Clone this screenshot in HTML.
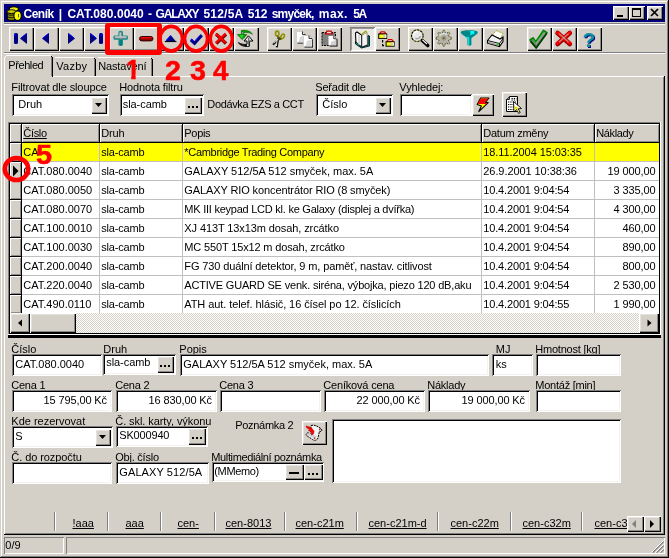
<!DOCTYPE html>
<html><head><meta charset="utf-8"><title>Ceník</title>
<style>
html,body{margin:0;padding:0;background:#D4D0C8;}
body{width:669px;height:558px;position:relative;overflow:hidden;font-family:"Liberation Sans",sans-serif;font-size:11px;color:#000;}
div,svg{position:absolute;box-sizing:border-box;}
svg{overflow:visible}
.t{white-space:nowrap;}
#w{left:0;top:0;width:669px;height:558px;will-change:transform;}
</style></head><body><div id="w">
<div style="left:0px;top:0px;width:669px;height:558px;background:#D4D0C8"></div>
<div style="left:1px;top:1px;width:667px;height:1px;background:#FFFFFF"></div>
<div style="left:1px;top:1px;width:1px;height:556px;background:#FFFFFF"></div>
<div style="left:0px;top:557px;width:669px;height:1px;background:#000000"></div>
<div style="left:668px;top:0px;width:1px;height:558px;background:#000000"></div>
<div style="left:1px;top:556px;width:667px;height:1px;background:#808080"></div>
<div style="left:667px;top:1px;width:1px;height:556px;background:#808080"></div>
<div style="left:4px;top:4px;width:661px;height:18px;background:#000080"></div>
<svg style="left:6px;top:6px" width="16" height="15" viewBox="0 0 16 15"><ellipse cx="7.8" cy="3" rx="4.6" ry="2.3" fill="#F0F000" stroke="#000" stroke-width="1.1"/>
<path d="M1.2 5.5 v6.5 c0 3.2 8.6 3.2 8.6 0 v-6.5z" fill="#909000" stroke="#000" stroke-width="1.1"/>
<path d="M1.2 7.6 c1 2.2 7 2.2 8.6 0 M1.2 10 c1 2.2 7 2.2 8.6 0" fill="none" stroke="#000" stroke-width=".9"/>
<ellipse cx="5.5" cy="5.6" rx="4.3" ry="2" fill="#C8C800" stroke="#000" stroke-width="1"/>
<ellipse cx="11.6" cy="9.7" rx="3.7" ry="4.7" fill="#FFFF00" stroke="#000" stroke-width="1.1"/>
<path d="M12.5 8 v3.5" stroke="#606000" stroke-width="1"/>
<rect x="4.4" y="2.4" width="1.1" height="1.1" fill="#C0C0C0"/><rect x="6.6" y="2.4" width="1.1" height="1.1" fill="#C0C0C0"/></svg>
<div class="t" style="left:23.5px;top:6.73px;font-size:12px;line-height:14px;letter-spacing:-0.498px;color:#fff;font-weight:bold">Ceník</div>
<div class="t" style="left:58.8px;top:6.73px;font-size:12px;line-height:14px;color:#fff;font-weight:bold">|</div>
<div class="t" style="left:67.4px;top:6.73px;font-size:12px;line-height:14px;letter-spacing:0.048px;color:#fff;font-weight:bold">CAT.080.0040</div>
<div class="t" style="left:147.9px;top:6.73px;font-size:12px;line-height:14px;color:#fff;font-weight:bold">-</div>
<div class="t" style="left:155.6px;top:6.73px;font-size:12px;line-height:14px;letter-spacing:-1.203px;color:#fff;font-weight:bold">GALAXY</div>
<div class="t" style="left:203.4px;top:6.73px;font-size:12px;line-height:14px;letter-spacing:0.233px;color:#fff;font-weight:bold">512/5A</div>
<div class="t" style="left:247.8px;top:6.73px;font-size:12px;line-height:14px;letter-spacing:-0.244px;color:#fff;font-weight:bold">512</div>
<div class="t" style="left:271.7px;top:6.73px;font-size:12px;line-height:14px;letter-spacing:-0.768px;color:#fff;font-weight:bold">smyček,</div>
<div class="t" style="left:318.8px;top:6.73px;font-size:12px;line-height:14px;letter-spacing:0.410px;color:#fff;font-weight:bold">max.</div>
<div class="t" style="left:353.2px;top:6.73px;font-size:12px;line-height:14px;letter-spacing:-1.322px;color:#fff;font-weight:bold">5A</div>
<div style="left:613px;top:6px;width:16px;height:14px;background:#D4D0C8;box-shadow:inset 1px 1px 0 #FFFFFF,inset -1px -1px 0 #000000,inset -2px -2px 0 #8C8A86,inset 2px 2px 0 #E6E3DE"></div>
<svg style="left:613px;top:6px" width="16" height="14" viewBox="0 0 16 14"><rect x="4" y="9" width="6" height="2" fill="#000"/></svg>
<div style="left:629px;top:6px;width:16px;height:14px;background:#D4D0C8;box-shadow:inset 1px 1px 0 #FFFFFF,inset -1px -1px 0 #000000,inset -2px -2px 0 #8C8A86,inset 2px 2px 0 #E6E3DE"></div>
<svg style="left:629px;top:6px" width="16" height="14" viewBox="0 0 16 14"><rect x="3.5" y="2.5" width="8" height="8" fill="none" stroke="#000"/><rect x="3" y="2" width="9" height="2" fill="#000"/></svg>
<div style="left:647px;top:6px;width:16px;height:14px;background:#D4D0C8;box-shadow:inset 1px 1px 0 #FFFFFF,inset -1px -1px 0 #000000,inset -2px -2px 0 #8C8A86,inset 2px 2px 0 #E6E3DE"></div>
<svg style="left:647px;top:6px" width="16" height="14" viewBox="0 0 16 14"><path d="M4 3 L11 10 M11 3 L4 10" stroke="#000" stroke-width="1.7" fill="none"/></svg>
<div style="left:4px;top:23px;width:661px;height:1px;background:#808080"></div>
<div style="left:4px;top:24px;width:661px;height:1px;background:#FFFFFF"></div>
<div style="left:4px;top:52px;width:661px;height:1px;background:#808080"></div>
<div style="left:4px;top:53px;width:661px;height:1px;background:#FFFFFF"></div>
<div style="left:9px;top:27px;width:25px;height:24px;background:#D4D0C8;box-shadow:inset 1px 1px 0 #FFFFFF,inset -1px -1px 0 #000000,inset -2px -2px 0 #8C8A86,inset 2px 2px 0 #E6E3DE"></div>
<svg style="left:9px;top:27px" width="25" height="24" viewBox="0 0 25 24"><rect x="5" y="6" width="4" height="11" rx="1.6" fill="#000080"/><rect x="5.6" y="6.6" width="1.4" height="2.4" fill="#0000FF"/><path d="M18 6 L18 17 L11 11.5Z" fill="#000080"/><path d="M17.5 6.5 L12 11" stroke="#0000FF" stroke-width="1"/></svg>
<div style="left:34px;top:27px;width:25px;height:24px;background:#D4D0C8;box-shadow:inset 1px 1px 0 #FFFFFF,inset -1px -1px 0 #000000,inset -2px -2px 0 #8C8A86,inset 2px 2px 0 #E6E3DE"></div>
<svg style="left:34px;top:27px" width="25" height="24" viewBox="0 0 25 24"><path d="M15 6 L15 17 L8 11.5Z" fill="#000080"/><path d="M14.5 6.5 L9 11" stroke="#0000FF" stroke-width="1"/></svg>
<div style="left:59px;top:27px;width:25px;height:24px;background:#D4D0C8;box-shadow:inset 1px 1px 0 #FFFFFF,inset -1px -1px 0 #000000,inset -2px -2px 0 #8C8A86,inset 2px 2px 0 #E6E3DE"></div>
<svg style="left:59px;top:27px" width="25" height="24" viewBox="0 0 25 24"><path d="M9 6 L9 17 L16 11.5Z" fill="#000080"/><path d="M9.6 6.5 L15 11" stroke="#0000FF" stroke-width="1"/></svg>
<div style="left:84px;top:27px;width:25px;height:24px;background:#D4D0C8;box-shadow:inset 1px 1px 0 #FFFFFF,inset -1px -1px 0 #000000,inset -2px -2px 0 #8C8A86,inset 2px 2px 0 #E6E3DE"></div>
<svg style="left:84px;top:27px" width="25" height="24" viewBox="0 0 25 24"><path d="M6 6 L6 17 L13 11.5Z" fill="#000080"/><path d="M6.6 6.5 L12 11" stroke="#0000FF" stroke-width="1"/><rect x="15" y="6" width="4" height="11" rx="1.6" fill="#000080"/><rect x="16.8" y="6.6" width="1.4" height="2.4" fill="#0000FF"/></svg>
<div style="left:109px;top:27px;width:25px;height:24px;background:#D4D0C8;box-shadow:inset 1px 1px 0 #FFFFFF,inset -1px -1px 0 #000000,inset -2px -2px 0 #8C8A86,inset 2px 2px 0 #E6E3DE"></div>
<svg style="left:109px;top:27px" width="25" height="24" viewBox="0 0 25 24"><path d="M10 5 q1.7 -1.2 3.4 0 v4 h4.6 q1.2 1.6 0 3.2 h-4.6 v5.6 q-1.7 1.2 -3.4 0 v-5.6 h-4.6 q-1.2 -1.6 0 -3.2 h4.6z" fill="#8A8A8A" stroke="#109090" stroke-width="1.2" stroke-linejoin="round"/><path d="M10.4 12.6 h2.6 v5.6 q-1.3 .8 -2.6 0z" fill="#008080"/><path d="M6 10 h11.4 M11.2 5.6 v4" stroke="#C8C8C8" stroke-width="1.4"/></svg>
<div style="left:134px;top:27px;width:25px;height:24px;background:#D4D0C8;box-shadow:inset 1px 1px 0 #FFFFFF,inset -1px -1px 0 #000000,inset -2px -2px 0 #8C8A86,inset 2px 2px 0 #E6E3DE"></div>
<svg style="left:134px;top:27px" width="25" height="24" viewBox="0 0 25 24"><rect x="5.5" y="9.5" width="13.5" height="4.4" rx="2.2" fill="#900000" stroke="#300000" stroke-width="1"/><rect x="7" y="10" width="10.5" height="1.4" fill="#FF0000"/></svg>
<div style="left:159px;top:27px;width:25px;height:24px;background:#D4D0C8;box-shadow:inset 1px 1px 0 #FFFFFF,inset -1px -1px 0 #000000,inset -2px -2px 0 #8C8A86,inset 2px 2px 0 #E6E3DE"></div>
<svg style="left:159px;top:27px" width="25" height="24" viewBox="0 0 25 24"><path d="M5.8 15 L17.4 15 L11.6 8Z" fill="#000080"/><path d="M7.4 13.6 L11.4 9.2" stroke="#0000FF" stroke-width="1.3"/><path d="M5.8 14.6 H17.4" stroke="#000" stroke-width="1"/></svg>
<div style="left:184px;top:27px;width:25px;height:24px;background:#D4D0C8;box-shadow:inset 1px 1px 0 #FFFFFF,inset -1px -1px 0 #000000,inset -2px -2px 0 #8C8A86,inset 2px 2px 0 #E6E3DE"></div>
<svg style="left:184px;top:27px" width="25" height="24" viewBox="0 0 25 24"><path d="M6.8 12.8 L10.6 16.4 L17.8 8.2" stroke="#000080" stroke-width="3" fill="none"/><path d="M7 12 L9.5 14.3" stroke="#0000FF" stroke-width="1.4" fill="none"/><path d="M11.5 13.2 L16.8 7.6" stroke="#0000FF" stroke-width="1" fill="none"/></svg>
<div style="left:209px;top:27px;width:25px;height:24px;background:#D4D0C8;box-shadow:inset 1px 1px 0 #FFFFFF,inset -1px -1px 0 #000000,inset -2px -2px 0 #8C8A86,inset 2px 2px 0 #E6E3DE"></div>
<svg style="left:209px;top:27px" width="25" height="24" viewBox="0 0 25 24"><path d="M7.2 7.2 L17 16.4 M17 7.2 L7.2 16.4" stroke="#800000" stroke-width="3.4" fill="none"/><path d="M6.8 6.6 L16.6 15.8 M16.6 6.6 L6.8 15.8" stroke="#FF0000" stroke-width="2" fill="none"/></svg>
<div style="left:234px;top:27px;width:25px;height:24px;background:#D4D0C8;box-shadow:inset 1px 1px 0 #FFFFFF,inset -1px -1px 0 #000000,inset -2px -2px 0 #8C8A86,inset 2px 2px 0 #E6E3DE"></div>
<svg style="left:234px;top:27px" width="25" height="24" viewBox="0 0 25 24"><path d="M18.4 7.2 C16.8 4.2 11.6 2.6 7.4 3.6 L7.4 7.6 L3.4 7.6 L8.2 12.6 L12.8 7.6 L9.8 7.6 L9.8 5.6 C12.8 5 16 5.6 18.4 7.2Z" fill="#00A000" stroke="#006000" stroke-width=".7" stroke-linejoin="round"/>
<path d="M5.4 8.4 L8.2 11.4 L9.2 8 Z" fill="#30E030"/><rect x="7.8" y="5.2" width="1.5" height="1.5" fill="#A0A0A0"/>
<path d="M4.4 15.6 C6 18.6 11.2 20.2 15.4 19.2 L15.4 14 L19 14 L14.4 8.8 L10 14 L13 14 L13 17.2 C10 17.8 6.8 17.2 4.4 15.6Z" fill="#E8E8E8" stroke="#000" stroke-width="1" stroke-linejoin="round"/>
<path d="M4.6 15.8 C7 18.8 11 19.4 13 18.8 L13 17.4 C10 18 6.8 17.4 4.6 15.8Z" fill="#000"/><path d="M14.6 10.6 v7.6" stroke="#707070" stroke-width="1.3"/></svg>
<div style="left:267px;top:27px;width:25px;height:24px;background:#D4D0C8;box-shadow:inset 1px 1px 0 #FFFFFF,inset -1px -1px 0 #000000,inset -2px -2px 0 #8C8A86,inset 2px 2px 0 #E6E3DE"></div>
<svg style="left:267px;top:27px" width="25" height="24" viewBox="0 0 25 24"><path d="M13.6 10.2 L6 17.6 M11.2 11.4 L9.8 20.4" stroke="#000" stroke-width="1.9" fill="none"/>
<path d="M12.6 10.6 L6.8 16.4 M10.2 12 L9.4 19" stroke="#fff" stroke-width=".9" fill="none"/>
<ellipse cx="10.2" cy="6.6" rx="1.7" ry="2.5" fill="none" stroke="#909000" stroke-width="1.6"/>
<ellipse cx="15.6" cy="9.4" rx="1.5" ry="2.5" fill="none" stroke="#909000" stroke-width="1.6" transform="rotate(28 15.6 9.4)"/>
<path d="M10.6 9 L11.8 12.2 M14.4 11.6 L12.4 12.6" stroke="#505000" stroke-width="1.5"/></svg>
<div style="left:292px;top:27px;width:25px;height:24px;background:#D4D0C8;box-shadow:inset 1px 1px 0 #FFFFFF,inset -1px -1px 0 #000000,inset -2px -2px 0 #8C8A86,inset 2px 2px 0 #E6E3DE"></div>
<svg style="left:292px;top:27px" width="25" height="24" viewBox="0 0 25 24"><path d="M5.5 5.5 h6 l3 3 v8 h-9z" fill="#000"/><path d="M4.5 4.5 h6 l3 3 v8 h-9z" fill="#fff" stroke="#C0C0C0" stroke-width=".6"/><path d="M8 10 l4.5 -1.5 v6.5 h-6z" fill="#D8D8D8"/><path d="M10.5 4.5 v3 h3" fill="none" stroke="#000" stroke-width=".8"/>
<path d="M12.5 9.5 h5.5 l3 3 v8 h-8.5z" fill="#000"/><path d="M11.5 8.5 h5.5 l3 3 v8 h-8.5z" fill="#fff" stroke="#C0C0C0" stroke-width=".6"/><path d="M15 14 l4.5 -1.5 v6.5 h-6z" fill="#D8D8D8"/><path d="M17 8.5 v3 h3" fill="none" stroke="#000" stroke-width=".8"/></svg>
<div style="left:317px;top:27px;width:25px;height:24px;background:#D4D0C8;box-shadow:inset 1px 1px 0 #FFFFFF,inset -1px -1px 0 #000000,inset -2px -2px 0 #8C8A86,inset 2px 2px 0 #E6E3DE"></div>
<svg style="left:317px;top:27px" width="25" height="24" viewBox="0 0 25 24"><rect x="5" y="5.5" width="13.5" height="13" fill="#808080" stroke="#000" stroke-width="1" stroke-dasharray="2 1"/>
<path d="M8.5 6.8 L10 4.2 h4 L15.5 6.8Z" fill="#E0E0E0" stroke="#C00000" stroke-width="1.2"/>
<path d="M12.5 10 h5.5 l2.5 2.5 v7 h-8z" fill="#000"/><path d="M11.5 9 h5.5 l2.5 2.5 v7 h-8z" fill="#fff"/><path d="M14.5 14.5 l4.5 -1.5 v5 h-5.5z" fill="#D0D0D0"/><path d="M16.8 9 v2.8 h2.7" fill="none" stroke="#000" stroke-width=".8"/></svg>
<div style="left:350px;top:27px;width:25px;height:24px;background:#EAE8E4;box-shadow:inset 1px 1px 0 #808080,inset -1px -1px 0 #FFFFFF,inset 2px 2px 0 #9A9894"></div>
<svg style="left:350px;top:27px" width="25" height="24" viewBox="0 0 25 24"><path d="M5.5 6 L7 5 L11.5 8 L11.5 20 L6 16.5Z" fill="#fff" stroke="#000" stroke-width="1.1"/>
<path d="M12 8.2 L17 5.5 L17.5 17.5 L12 20Z" fill="#F4F4F4" stroke="#808080" stroke-width=".8"/>
<path d="M17 5.5 L15.5 4.3 L11.5 7.5" fill="none" stroke="#A0A000" stroke-width="1.2"/>
<path d="M5.5 14.5 L5.5 17 L11.5 21 L19.5 19 L19.5 9 L18 8.5 L18 18 L11.8 20.2Z" fill="#00A0A0" stroke="#000" stroke-width=".8"/>
<path d="M9 8 L9 18" stroke="#C0C0C0" stroke-width="1.2"/></svg>
<div style="left:375px;top:27px;width:25px;height:24px;background:#D4D0C8;box-shadow:inset 1px 1px 0 #FFFFFF,inset -1px -1px 0 #000000,inset -2px -2px 0 #8C8A86,inset 2px 2px 0 #E6E3DE"></div>
<svg style="left:375px;top:27px" width="25" height="24" viewBox="0 0 25 24"><path d="M4.4 6.800000000000001 L6.0 4.8 h3.4 L11.0 6.800000000000001Z" fill="#E8E8E8" stroke="#D80000" stroke-width="1.2"/><rect x="3.7" y="7.0" width="8" height="4.4" fill="#FFFF00" stroke="#000" stroke-width="1"/><rect x="8.2" y="7.5" width="2.2" height="3.4" fill="#C8C8C8"/><rect x="10.4" y="7.5" width="1" height="3.4" fill="#fff"/><path d="M11.799999999999999 14.6 L13.399999999999999 12.6 h3.4 L18.4 14.6Z" fill="#E8E8E8" stroke="#D80000" stroke-width="1.2"/><rect x="11.1" y="14.8" width="8" height="4.4" fill="#FFFF00" stroke="#000" stroke-width="1"/><rect x="15.6" y="15.3" width="2.2" height="3.4" fill="#C8C8C8"/><rect x="17.8" y="15.3" width="1" height="3.4" fill="#fff"/><path d="M7.6 13 v2.4 M7.6 17 v1.6 h1.4" stroke="#000" stroke-width="1.2" fill="none"/></svg>
<div style="left:408px;top:27px;width:25px;height:24px;background:#D4D0C8;box-shadow:inset 1px 1px 0 #FFFFFF,inset -1px -1px 0 #000000,inset -2px -2px 0 #8C8A86,inset 2px 2px 0 #E6E3DE"></div>
<svg style="left:408px;top:27px" width="25" height="24" viewBox="0 0 25 24"><path d="M14 13.2 L19.8 18.6" stroke="#000" stroke-width="3.4" stroke-linecap="round"/><path d="M14.2 12.6 L19 17" stroke="#fff" stroke-width="1.1"/>
<circle cx="9.3" cy="8.7" r="5.8" fill="#E8E8E8" stroke="#000" stroke-width="1.1" stroke-dasharray="2.2 1.1"/><circle cx="9.3" cy="8.7" r="5.8" fill="none" stroke="#909000" stroke-width="1.1" stroke-dasharray="1.1 2.2" stroke-dashoffset="1.1"/>
<path d="M5.5 8 A4 4 0 0 1 10 4.6" stroke="#fff" stroke-width="1.6" fill="none"/><path d="M7.5 11 C9 12.5 12 11.5 12.5 9" stroke="#A0A0A0" stroke-width="1.3" fill="none"/></svg>
<div style="left:433px;top:27px;width:25px;height:24px;background:#D4D0C8;box-shadow:inset 1px 1px 0 #FFFFFF,inset -1px -1px 0 #000000,inset -2px -2px 0 #8C8A86,inset 2px 2px 0 #E6E3DE"></div>
<svg style="left:433px;top:27px" width="25" height="24" viewBox="0 0 25 24"><polygon points="10.03,3.34 11.57,3.34 12.37,6.03 13.35,6.44 15.81,5.09 16.91,6.19 15.56,8.65 15.97,9.63 18.66,10.43 18.66,11.97 15.97,12.77 15.56,13.75 16.91,16.21 15.81,17.31 13.35,15.96 12.37,16.37 11.57,19.06 10.03,19.06 9.23,16.37 8.25,15.96 5.79,17.31 4.69,16.21 6.04,13.75 5.63,12.77 2.94,11.97 2.94,10.43 5.63,9.63 6.04,8.65 4.69,6.19 5.79,5.09 8.25,6.44 9.23,6.03" fill="#B4B4B4" stroke="#303030" stroke-width=".9" stroke-dasharray="1.5 1.5"/><polygon points="10.03,3.34 11.57,3.34 12.37,6.03 13.35,6.44 15.81,5.09 16.91,6.19 15.56,8.65 15.97,9.63 18.66,10.43 18.66,11.97 15.97,12.77 15.56,13.75 16.91,16.21 15.81,17.31 13.35,15.96 12.37,16.37 11.57,19.06 10.03,19.06 9.23,16.37 8.25,15.96 5.79,17.31 4.69,16.21 6.04,13.75 5.63,12.77 2.94,11.97 2.94,10.43 5.63,9.63 6.04,8.65 4.69,6.19 5.79,5.09 8.25,6.44 9.23,6.03" fill="none" stroke="#909000" stroke-width=".9" stroke-dasharray="1 2" stroke-dashoffset="1.5"/><path d="M6.5 9 A4.8 4.8 0 0 1 14 7.6" stroke="#E0E0E0" stroke-width="1.4" fill="none"/><circle cx="10.8" cy="11.2" r="2.2" fill="#909090" stroke="#B0A040" stroke-width=".8"/><circle cx="10.8" cy="11.2" r=".9" fill="#606060"/></svg>
<div style="left:458px;top:27px;width:25px;height:24px;background:#D4D0C8;box-shadow:inset 1px 1px 0 #FFFFFF,inset -1px -1px 0 #000000,inset -2px -2px 0 #8C8A86,inset 2px 2px 0 #E6E3DE"></div>
<svg style="left:458px;top:27px" width="25" height="24" viewBox="0 0 25 24"><path d="M2.8 5.2 C2.8 2.6 19.8 2.6 19.8 5.2 C19.8 7 15.4 9.4 13.4 11.2 L13.4 17.6 C13.4 19.2 9.4 19.2 9.4 17.6 L9.4 11.2 C7.4 9.4 2.8 7 2.8 5.2Z" fill="#008888"/><path d="M12.4 4 h3.8 v3.2 l-1.4 -.3 l-2.4 1.6z" fill="#00FFFF"/><path d="M7.6 10.2 L10.6 10.8 V18" stroke="#00E8E8" stroke-width="1.4" fill="none"/></svg>
<div style="left:483px;top:27px;width:25px;height:24px;background:#D4D0C8;box-shadow:inset 1px 1px 0 #FFFFFF,inset -1px -1px 0 #000000,inset -2px -2px 0 #8C8A86,inset 2px 2px 0 #E6E3DE"></div>
<svg style="left:483px;top:27px" width="25" height="24" viewBox="0 0 25 24"><path d="M9.5 8.5 L13 3.5 L20 6.5 L17.5 11.5Z" fill="#fff" stroke="#A0A000" stroke-width=".9" stroke-dasharray="2 1"/>
<path d="M4.5 13.5 L9 8 L12 9.5 L17 12 L20 10 L20 14.5 L16.5 19.5 L4.5 16Z" fill="#F0F0F0" stroke="#000" stroke-width="1.1"/>
<path d="M4.5 13.5 L16.5 16.5 L20 11.5 M16.5 16.5 V19.5" stroke="#000" stroke-width=".9" fill="none"/>
<path d="M5 15.3 L16 18.3" stroke="#A0A0A0" stroke-width="1.4"/>
<rect x="13.6" y="16.6" width="1.8" height="1.4" fill="#00E000"/></svg>
<div style="left:527px;top:27px;width:25px;height:24px;background:#D4D0C8;box-shadow:inset 1px 1px 0 #FFFFFF,inset -1px -1px 0 #000000,inset -2px -2px 0 #8C8A86,inset 2px 2px 0 #E6E3DE"></div>
<svg style="left:527px;top:27px" width="25" height="24" viewBox="0 0 25 24"><path d="M3 13 L6 10.8 L8.8 14.6 L16.4 3.4 L20 5.6 L9.2 21Z" fill="#808080" stroke="#008000" stroke-width="1.6" stroke-linejoin="round"/>
<path d="M3.6 14.4 L9.2 20.8 L19.8 6.4" stroke="#003800" stroke-width="1.6" fill="none"/><path d="M6 12.4 L8.8 16 L17 4.8" stroke="#20B020" stroke-width="1.2" fill="none"/><path d="M8.9 17.2 L17.6 5.6" stroke="#A0A0A0" stroke-width="1.3" fill="none"/></svg>
<div style="left:552px;top:27px;width:25px;height:24px;background:#D4D0C8;box-shadow:inset 1px 1px 0 #FFFFFF,inset -1px -1px 0 #000000,inset -2px -2px 0 #8C8A86,inset 2px 2px 0 #E6E3DE"></div>
<svg style="left:552px;top:27px" width="25" height="24" viewBox="0 0 25 24"><path d="M5.6 6 L17.8 17 M17.8 6 L5.6 17" stroke="#900000" stroke-width="4.6" stroke-linecap="round" fill="none"/>
<path d="M5.6 5.6 L17.8 16.4 M17.8 5.6 L5.6 16.4" stroke="#FF0000" stroke-width="3.2" stroke-linecap="round" fill="none"/>
<path d="M7 6.6 L16.6 15.2 M16.6 6.6 L7 15.2" stroke="#B0A090" stroke-width="1.1" fill="none"/></svg>
<div style="left:577px;top:27px;width:25px;height:24px;background:#D4D0C8;box-shadow:inset 1px 1px 0 #FFFFFF,inset -1px -1px 0 #000000,inset -2px -2px 0 #8C8A86,inset 2px 2px 0 #E6E3DE"></div>
<div class="t" style="left:583.5px;top:28.86px;font-size:21px;line-height:23px;color:#000080;font-weight:bold">?</div>
<div class="t" style="left:582.5px;top:28.06px;font-size:21px;line-height:23px;color:#1090A0;font-weight:bold">?</div>
<div style="left:53px;top:76px;width:611px;height:1px;background:#FFFFFF"></div>
<div style="left:4px;top:76px;width:1px;height:458px;background:#FFFFFF"></div>
<div style="left:5px;top:533px;width:659px;height:1px;background:#808080"></div>
<div style="left:4px;top:534px;width:661px;height:1px;background:#000000"></div>
<div style="left:663px;top:77px;width:1px;height:457px;background:#808080"></div>
<div style="left:664px;top:76px;width:1px;height:459px;background:#000000"></div>
<div style="left:6px;top:55px;width:45px;height:1px;background:#FFFFFF"></div>
<div style="left:4px;top:57px;width:1px;height:20px;background:#FFFFFF"></div>
<div style="left:5px;top:56px;width:1px;height:1px;background:#FFFFFF"></div>
<div style="left:51px;top:57px;width:1px;height:19px;background:#808080"></div>
<div style="left:52px;top:57px;width:1px;height:20px;background:#000000"></div>
<div style="left:51px;top:56px;width:1px;height:1px;background:#000000"></div>
<div class="t" style="left:8.3px;top:58.86px;font-size:11px;line-height:13px;letter-spacing:-0.417px;">Přehled</div>
<div style="left:55px;top:57px;width:39px;height:1px;background:#FFFFFF"></div>
<div style="left:94px;top:59px;width:1px;height:17px;background:#808080"></div>
<div style="left:95px;top:59px;width:1px;height:17px;background:#000000"></div>
<div style="left:94px;top:58px;width:1px;height:1px;background:#000000"></div>
<div class="t" style="left:56.3px;top:59.86px;font-size:11px;line-height:13px;letter-spacing:0.247px;">Vazby</div>
<div style="left:98px;top:57px;width:53px;height:1px;background:#FFFFFF"></div>
<div style="left:151px;top:59px;width:1px;height:17px;background:#808080"></div>
<div style="left:152px;top:59px;width:1px;height:17px;background:#000000"></div>
<div style="left:151px;top:58px;width:1px;height:1px;background:#000000"></div>
<div class="t" style="left:98.3px;top:59.86px;font-size:11px;line-height:13px;letter-spacing:-0.170px;">Nastavení</div>
<div class="t" style="left:11.3px;top:80.86px;font-size:11px;line-height:13px;letter-spacing:-0.111px;">Filtrovat dle sloupce</div>
<div style="left:12px;top:94px;width:97px;height:22px;background:#FFFFFF;box-shadow:inset 1px 1px 0 #808080,inset -1px -1px 0 #FFFFFF,inset 2px 2px 0 #000000,inset -2px -2px 0 #F4F3F0"></div>
<div class="t" style="left:18.3px;top:97.86px;font-size:11px;line-height:13px;">Druh</div>
<div style="left:91px;top:97px;width:16px;height:17px;background:#D4D0C8;box-shadow:inset 1px 1px 0 #FFFFFF,inset -1px -1px 0 #000000,inset -2px -2px 0 #8C8A86,inset 2px 2px 0 #E6E3DE"></div>
<svg style="left:91px;top:97px" width="16" height="17" viewBox="0 0 16 17"><path d="M4 6.0 h7 l-3.5 4z" fill="#000"/></svg>
<div class="t" style="left:119.3px;top:80.86px;font-size:11px;line-height:13px;letter-spacing:-0.138px;">Hodnota filtru</div>
<div style="left:120px;top:94px;width:84px;height:22px;background:#FFFFFF;box-shadow:inset 1px 1px 0 #808080,inset -1px -1px 0 #FFFFFF,inset 2px 2px 0 #000000,inset -2px -2px 0 #F4F3F0"></div>
<div class="t" style="left:122.8px;top:97.86px;font-size:11px;line-height:13px;letter-spacing:-0.078px;">sla-camb</div>
<div style="left:184px;top:97px;width:18px;height:17px;background:#D4D0C8;box-shadow:inset 1px 1px 0 #FFFFFF,inset -1px -1px 0 #000000,inset -2px -2px 0 #8C8A86,inset 2px 2px 0 #E6E3DE"></div>
<svg style="left:184px;top:97px" width="18" height="17" viewBox="0 0 18 17"><rect x="4" y="9" width="2" height="2" fill="#000"/><rect x="8" y="9" width="2" height="2" fill="#000"/><rect x="12" y="9" width="2" height="2" fill="#000"/></svg>
<div class="t" style="left:207.3px;top:97.86px;font-size:11px;line-height:13px;letter-spacing:-0.365px;">Dodávka EZS a CCT</div>
<div class="t" style="left:315.3px;top:80.86px;font-size:11px;line-height:13px;letter-spacing:-0.190px;">Seřadit dle</div>
<div style="left:316px;top:94px;width:77px;height:22px;background:#FFFFFF;box-shadow:inset 1px 1px 0 #808080,inset -1px -1px 0 #FFFFFF,inset 2px 2px 0 #000000,inset -2px -2px 0 #F4F3F0"></div>
<div class="t" style="left:322.3px;top:97.86px;font-size:11px;line-height:13px;">Číslo</div>
<div style="left:375px;top:97px;width:16px;height:17px;background:#D4D0C8;box-shadow:inset 1px 1px 0 #FFFFFF,inset -1px -1px 0 #000000,inset -2px -2px 0 #8C8A86,inset 2px 2px 0 #E6E3DE"></div>
<svg style="left:375px;top:97px" width="16" height="17" viewBox="0 0 16 17"><path d="M4 6.0 h7 l-3.5 4z" fill="#000"/></svg>
<div class="t" style="left:399.3px;top:80.86px;font-size:11px;line-height:13px;letter-spacing:-0.094px;">Vyhledej:</div>
<div style="left:400px;top:94px;width:72px;height:22px;background:#FFFFFF;box-shadow:inset 1px 1px 0 #808080,inset -1px -1px 0 #FFFFFF,inset 2px 2px 0 #000000,inset -2px -2px 0 #F4F3F0"></div>
<div style="left:472px;top:94px;width:22px;height:22px;background:#D4D0C8;box-shadow:inset 1px 1px 0 #FFFFFF,inset -1px -1px 0 #000000,inset -2px -2px 0 #8C8A86,inset 2px 2px 0 #E6E3DE"></div>
<svg style="left:472px;top:94px" width="22" height="22" viewBox="0 0 22 22"><path d="M8.6 4 L17 4 L13.4 8.4 L16.2 8.6 L6.8 17.6 L9.4 12 L5.2 10.6Z" fill="#FFFF00" stroke="#000" stroke-width="1.1" stroke-linejoin="round"/><path d="M8.9 4.5 L16 4.5 L12.4 8.9 L15 9 L14.2 9.9 L5.9 9.9Z" fill="#FF0000"/></svg>
<div style="left:502px;top:92px;width:25px;height:25px;background:#D4D0C8;box-shadow:inset 1px 1px 0 #FFFFFF,inset -1px -1px 0 #000000,inset -2px -2px 0 #8C8A86,inset 2px 2px 0 #E6E3DE"></div>
<svg style="left:502px;top:92px" width="25" height="25" viewBox="0 0 25 25"><path d="M4.5 7.5 L7.5 4.5 H15.5 V19.5 H4.5Z" fill="#fff" stroke="#000" stroke-width="1"/><path d="M4.5 7.5 H7.5 V4.5" fill="#808080" stroke="#000" stroke-width=".8"/>
<path d="M6 10 h8 M6 12.5 h8 M6 15 h8 M6 17.5 h8 M9.5 6.5 h5 M9.5 8 h5" stroke="#000" stroke-width="1.2" stroke-dasharray="1.3 1"/>
<path d="M11.5 9.5 L19.5 16.5 L16.2 16.8 L18.2 20.6 L16.6 21.4 L14.6 17.6 L12 20Z" fill="#fff" stroke="#000" stroke-width=".9"/><path d="M12.6 14 L12.6 18.5 L14.6 16.6 L16.4 20.4 L17 20 L15.4 16.2 L17 16Z" fill="#F0E000"/></svg>
<div style="left:8px;top:122px;width:1px;height:212px;background:#808080"></div>
<div style="left:8px;top:122px;width:652px;height:1px;background:#808080"></div>
<div style="left:9px;top:123px;width:1px;height:211px;background:#000000"></div>
<div style="left:9px;top:123px;width:651px;height:1px;background:#000000"></div>
<div style="left:8px;top:334px;width:653px;height:1px;background:#FFFFFF"></div>
<div style="left:660px;top:122px;width:1px;height:213px;background:#FFFFFF"></div>
<div style="left:10px;top:333px;width:650px;height:1px;background:#000000"></div>
<div style="left:659px;top:124px;width:1px;height:210px;background:#000000"></div>
<div style="left:10px;top:124px;width:649px;height:190px;background:#FFFFFF"></div>
<div style="left:10px;top:124px;width:11px;height:18px;background:#D4D0C8;box-shadow:inset 1px 1px 0 #FFFFFF,inset -1px -1px 0 #8C8A86"></div>
<div style="left:21px;top:124px;width:1px;height:19px;background:#000000"></div>
<div style="left:22px;top:124px;width:77px;height:18px;background:#D4D0C8;box-shadow:inset 1px 1px 0 #FFFFFF,inset -1px -1px 0 #8C8A86"></div>
<div style="left:99px;top:124px;width:1px;height:19px;background:#000000"></div>
<div class="t" style="left:23.3px;top:126.86px;font-size:11px;line-height:13px;letter-spacing:-0.312px;text-decoration:underline">Číslo</div>
<div style="left:100px;top:124px;width:82px;height:18px;background:#D4D0C8;box-shadow:inset 1px 1px 0 #FFFFFF,inset -1px -1px 0 #8C8A86"></div>
<div style="left:182px;top:124px;width:1px;height:19px;background:#000000"></div>
<div class="t" style="left:101.3px;top:126.86px;font-size:11px;line-height:13px;letter-spacing:-0.211px;">Druh</div>
<div style="left:183px;top:124px;width:298px;height:18px;background:#D4D0C8;box-shadow:inset 1px 1px 0 #FFFFFF,inset -1px -1px 0 #8C8A86"></div>
<div style="left:481px;top:124px;width:1px;height:19px;background:#000000"></div>
<div class="t" style="left:184.3px;top:126.86px;font-size:11px;line-height:13px;letter-spacing:-0.306px;">Popis</div>
<div style="left:482px;top:124px;width:112px;height:18px;background:#D4D0C8;box-shadow:inset 1px 1px 0 #FFFFFF,inset -1px -1px 0 #8C8A86"></div>
<div style="left:594px;top:124px;width:1px;height:19px;background:#000000"></div>
<div class="t" style="left:483.3px;top:126.86px;font-size:11px;line-height:13px;letter-spacing:-0.260px;">Datum změny</div>
<div style="left:595px;top:124px;width:64px;height:18px;background:#D4D0C8;box-shadow:inset 1px 1px 0 #FFFFFF,inset -1px -1px 0 #8C8A86"></div>
<div class="t" style="left:596.3px;top:126.86px;font-size:11px;line-height:13px;letter-spacing:-0.393px;">Náklady</div>
<div style="left:10px;top:142px;width:649px;height:1px;background:#000000"></div>
<div style="left:10px;top:143px;width:11px;height:18px;background:#D4D0C8;box-shadow:inset 1px 1px 0 #FFFFFF,inset -1px -1px 0 #8C8A86"></div>
<div style="left:21px;top:143px;width:1px;height:19px;background:#000000"></div>
<div style="left:10px;top:161px;width:12px;height:1px;background:#000000"></div>
<div style="left:22px;top:143px;width:637px;height:18px;background:#FFFF00"></div>
<div style="left:22px;top:161px;width:637px;height:1px;background:#C0C0C0"></div>
<div style="left:99px;top:143px;width:1px;height:19px;background:#C0C0C0"></div>
<div class="t" style="left:23.3px;top:145.86px;font-size:11px;line-height:13px;">CA</div>
<div style="left:182px;top:143px;width:1px;height:19px;background:#C0C0C0"></div>
<div class="t" style="left:101.3px;top:145.86px;font-size:11px;line-height:13px;letter-spacing:-0.203px;">sla-camb</div>
<div style="left:481px;top:143px;width:1px;height:19px;background:#C0C0C0"></div>
<div class="t" style="left:184.3px;top:145.86px;font-size:11px;line-height:13px;letter-spacing:-0.306px;">*Cambridge Trading Company</div>
<div style="left:594px;top:143px;width:1px;height:19px;background:#C0C0C0"></div>
<div class="t" style="left:483.3px;top:145.86px;font-size:11px;line-height:13px;letter-spacing:-0.086px;">18.11.2004 15:03:35</div>
<div style="left:10px;top:162px;width:11px;height:18px;background:#D4D0C8;box-shadow:inset 1px 1px 0 #FFFFFF,inset -1px -1px 0 #8C8A86"></div>
<div style="left:21px;top:162px;width:1px;height:19px;background:#000000"></div>
<div style="left:10px;top:180px;width:12px;height:1px;background:#000000"></div>
<div style="left:22px;top:180px;width:637px;height:1px;background:#C0C0C0"></div>
<div style="left:99px;top:162px;width:1px;height:19px;background:#C0C0C0"></div>
<div class="t" style="left:23.3px;top:164.86px;font-size:11px;line-height:13px;">CAT.080.0040</div>
<div style="left:182px;top:162px;width:1px;height:19px;background:#C0C0C0"></div>
<div class="t" style="left:101.3px;top:164.86px;font-size:11px;line-height:13px;letter-spacing:-0.203px;">sla-camb</div>
<div style="left:481px;top:162px;width:1px;height:19px;background:#C0C0C0"></div>
<div class="t" style="left:184.3px;top:164.86px;font-size:11px;line-height:13px;letter-spacing:-0.010px;">GALAXY 512/5A 512 smyček, max. 5A</div>
<div style="left:594px;top:162px;width:1px;height:19px;background:#C0C0C0"></div>
<div class="t" style="left:483.3px;top:164.86px;font-size:11px;line-height:13px;letter-spacing:-0.073px;">26.9.2001 10:38:36</div>
<div class="t" style="left:595px;top:164.86px;font-size:11px;line-height:13px;width:60.6px;text-align:right;letter-spacing:-0.104px;margin-right:0.104px;">19 000,00</div>
<svg style="left:10px;top:162px" width="11" height="18" viewBox="0 0 11 18"><path d="M3 3.5 L3 14.5 L8.5 9Z" fill="#000"/></svg>
<div style="left:10px;top:181px;width:11px;height:18px;background:#D4D0C8;box-shadow:inset 1px 1px 0 #FFFFFF,inset -1px -1px 0 #8C8A86"></div>
<div style="left:21px;top:181px;width:1px;height:19px;background:#000000"></div>
<div style="left:10px;top:199px;width:12px;height:1px;background:#000000"></div>
<div style="left:22px;top:199px;width:637px;height:1px;background:#C0C0C0"></div>
<div style="left:99px;top:181px;width:1px;height:19px;background:#C0C0C0"></div>
<div class="t" style="left:23.3px;top:183.86px;font-size:11px;line-height:13px;">CAT.080.0050</div>
<div style="left:182px;top:181px;width:1px;height:19px;background:#C0C0C0"></div>
<div class="t" style="left:101.3px;top:183.86px;font-size:11px;line-height:13px;letter-spacing:-0.203px;">sla-camb</div>
<div style="left:481px;top:181px;width:1px;height:19px;background:#C0C0C0"></div>
<div class="t" style="left:184.3px;top:183.86px;font-size:11px;line-height:13px;letter-spacing:-0.108px;">GALAXY RIO koncentrátor RIO (8 smyček)</div>
<div style="left:594px;top:181px;width:1px;height:19px;background:#C0C0C0"></div>
<div class="t" style="left:483.3px;top:183.86px;font-size:11px;line-height:13px;letter-spacing:-0.159px;">10.4.2001 9:04:54</div>
<div class="t" style="left:595px;top:183.86px;font-size:11px;line-height:13px;width:60.6px;text-align:right;letter-spacing:-0.104px;margin-right:0.104px;">3 335,00</div>
<div style="left:10px;top:200px;width:11px;height:18px;background:#D4D0C8;box-shadow:inset 1px 1px 0 #FFFFFF,inset -1px -1px 0 #8C8A86"></div>
<div style="left:21px;top:200px;width:1px;height:19px;background:#000000"></div>
<div style="left:10px;top:218px;width:12px;height:1px;background:#000000"></div>
<div style="left:22px;top:218px;width:637px;height:1px;background:#C0C0C0"></div>
<div style="left:99px;top:200px;width:1px;height:19px;background:#C0C0C0"></div>
<div class="t" style="left:23.3px;top:202.86px;font-size:11px;line-height:13px;">CAT.080.0070</div>
<div style="left:182px;top:200px;width:1px;height:19px;background:#C0C0C0"></div>
<div class="t" style="left:101.3px;top:202.86px;font-size:11px;line-height:13px;letter-spacing:-0.203px;">sla-camb</div>
<div style="left:481px;top:200px;width:1px;height:19px;background:#C0C0C0"></div>
<div class="t" style="left:184.3px;top:202.86px;font-size:11px;line-height:13px;letter-spacing:-0.242px;">MK III keypad LCD kl. ke Galaxy (displej a dvířka)</div>
<div style="left:594px;top:200px;width:1px;height:19px;background:#C0C0C0"></div>
<div class="t" style="left:483.3px;top:202.86px;font-size:11px;line-height:13px;letter-spacing:-0.159px;">10.4.2001 9:04:54</div>
<div class="t" style="left:595px;top:202.86px;font-size:11px;line-height:13px;width:60.6px;text-align:right;letter-spacing:-0.104px;margin-right:0.104px;">4 300,00</div>
<div style="left:10px;top:219px;width:11px;height:18px;background:#D4D0C8;box-shadow:inset 1px 1px 0 #FFFFFF,inset -1px -1px 0 #8C8A86"></div>
<div style="left:21px;top:219px;width:1px;height:19px;background:#000000"></div>
<div style="left:10px;top:237px;width:12px;height:1px;background:#000000"></div>
<div style="left:22px;top:237px;width:637px;height:1px;background:#C0C0C0"></div>
<div style="left:99px;top:219px;width:1px;height:19px;background:#C0C0C0"></div>
<div class="t" style="left:23.3px;top:221.86px;font-size:11px;line-height:13px;">CAT.100.0010</div>
<div style="left:182px;top:219px;width:1px;height:19px;background:#C0C0C0"></div>
<div class="t" style="left:101.3px;top:221.86px;font-size:11px;line-height:13px;letter-spacing:-0.203px;">sla-camb</div>
<div style="left:481px;top:219px;width:1px;height:19px;background:#C0C0C0"></div>
<div class="t" style="left:184.3px;top:221.86px;font-size:11px;line-height:13px;letter-spacing:-0.099px;">XJ 413T 13x13m dosah, zrcátko</div>
<div style="left:594px;top:219px;width:1px;height:19px;background:#C0C0C0"></div>
<div class="t" style="left:483.3px;top:221.86px;font-size:11px;line-height:13px;letter-spacing:-0.159px;">10.4.2001 9:04:54</div>
<div class="t" style="left:595px;top:221.86px;font-size:11px;line-height:13px;width:60.6px;text-align:right;letter-spacing:-0.109px;margin-right:0.109px;">460,00</div>
<div style="left:10px;top:238px;width:11px;height:18px;background:#D4D0C8;box-shadow:inset 1px 1px 0 #FFFFFF,inset -1px -1px 0 #8C8A86"></div>
<div style="left:21px;top:238px;width:1px;height:19px;background:#000000"></div>
<div style="left:10px;top:256px;width:12px;height:1px;background:#000000"></div>
<div style="left:22px;top:256px;width:637px;height:1px;background:#C0C0C0"></div>
<div style="left:99px;top:238px;width:1px;height:19px;background:#C0C0C0"></div>
<div class="t" style="left:23.3px;top:240.86px;font-size:11px;line-height:13px;">CAT.100.0030</div>
<div style="left:182px;top:238px;width:1px;height:19px;background:#C0C0C0"></div>
<div class="t" style="left:101.3px;top:240.86px;font-size:11px;line-height:13px;letter-spacing:-0.203px;">sla-camb</div>
<div style="left:481px;top:238px;width:1px;height:19px;background:#C0C0C0"></div>
<div class="t" style="left:184.3px;top:240.86px;font-size:11px;line-height:13px;letter-spacing:-0.146px;">MC 550T 15x12 m dosah, zrcátko</div>
<div style="left:594px;top:238px;width:1px;height:19px;background:#C0C0C0"></div>
<div class="t" style="left:483.3px;top:240.86px;font-size:11px;line-height:13px;letter-spacing:-0.159px;">10.4.2001 9:04:54</div>
<div class="t" style="left:595px;top:240.86px;font-size:11px;line-height:13px;width:60.6px;text-align:right;letter-spacing:-0.109px;margin-right:0.109px;">890,00</div>
<div style="left:10px;top:257px;width:11px;height:18px;background:#D4D0C8;box-shadow:inset 1px 1px 0 #FFFFFF,inset -1px -1px 0 #8C8A86"></div>
<div style="left:21px;top:257px;width:1px;height:19px;background:#000000"></div>
<div style="left:10px;top:275px;width:12px;height:1px;background:#000000"></div>
<div style="left:22px;top:275px;width:637px;height:1px;background:#C0C0C0"></div>
<div style="left:99px;top:257px;width:1px;height:19px;background:#C0C0C0"></div>
<div class="t" style="left:23.3px;top:259.86px;font-size:11px;line-height:13px;">CAT.200.0040</div>
<div style="left:182px;top:257px;width:1px;height:19px;background:#C0C0C0"></div>
<div class="t" style="left:101.3px;top:259.86px;font-size:11px;line-height:13px;letter-spacing:-0.203px;">sla-camb</div>
<div style="left:481px;top:257px;width:1px;height:19px;background:#C0C0C0"></div>
<div class="t" style="left:184.3px;top:259.86px;font-size:11px;line-height:13px;letter-spacing:-0.123px;">FG 730 duální detektor, 9 m, paměť, nastav. citlivost</div>
<div style="left:594px;top:257px;width:1px;height:19px;background:#C0C0C0"></div>
<div class="t" style="left:483.3px;top:259.86px;font-size:11px;line-height:13px;letter-spacing:-0.159px;">10.4.2001 9:04:54</div>
<div class="t" style="left:595px;top:259.86px;font-size:11px;line-height:13px;width:60.6px;text-align:right;letter-spacing:-0.109px;margin-right:0.109px;">800,00</div>
<div style="left:10px;top:276px;width:11px;height:18px;background:#D4D0C8;box-shadow:inset 1px 1px 0 #FFFFFF,inset -1px -1px 0 #8C8A86"></div>
<div style="left:21px;top:276px;width:1px;height:19px;background:#000000"></div>
<div style="left:10px;top:294px;width:12px;height:1px;background:#000000"></div>
<div style="left:22px;top:294px;width:637px;height:1px;background:#C0C0C0"></div>
<div style="left:99px;top:276px;width:1px;height:19px;background:#C0C0C0"></div>
<div class="t" style="left:23.3px;top:278.86px;font-size:11px;line-height:13px;">CAT.220.0040</div>
<div style="left:182px;top:276px;width:1px;height:19px;background:#C0C0C0"></div>
<div class="t" style="left:101.3px;top:278.86px;font-size:11px;line-height:13px;letter-spacing:-0.203px;">sla-camb</div>
<div style="left:481px;top:276px;width:1px;height:19px;background:#C0C0C0"></div>
<div class="t" style="left:184.3px;top:278.86px;font-size:11px;line-height:13px;letter-spacing:-0.184px;">ACTIVE GUARD SE venk. siréna, výbojka, piezo 120 dB,aku</div>
<div style="left:594px;top:276px;width:1px;height:19px;background:#C0C0C0"></div>
<div class="t" style="left:483.3px;top:278.86px;font-size:11px;line-height:13px;letter-spacing:-0.159px;">10.4.2001 9:04:54</div>
<div class="t" style="left:595px;top:278.86px;font-size:11px;line-height:13px;width:60.6px;text-align:right;letter-spacing:-0.104px;margin-right:0.104px;">2 530,00</div>
<div style="left:10px;top:295px;width:11px;height:18px;background:#D4D0C8;box-shadow:inset 1px 1px 0 #FFFFFF,inset -1px -1px 0 #8C8A86"></div>
<div style="left:21px;top:295px;width:1px;height:19px;background:#000000"></div>
<div style="left:99px;top:295px;width:1px;height:18px;background:#C0C0C0"></div>
<div class="t" style="left:23.3px;top:297.86px;font-size:11px;line-height:13px;">CAT.490.0110</div>
<div style="left:182px;top:295px;width:1px;height:18px;background:#C0C0C0"></div>
<div class="t" style="left:101.3px;top:297.86px;font-size:11px;line-height:13px;letter-spacing:-0.203px;">sla-camb</div>
<div style="left:481px;top:295px;width:1px;height:18px;background:#C0C0C0"></div>
<div class="t" style="left:184.3px;top:297.86px;font-size:11px;line-height:13px;letter-spacing:-0.082px;">ATH aut. telef. hlásič, 16 čísel po 12. číslicích</div>
<div style="left:594px;top:295px;width:1px;height:18px;background:#C0C0C0"></div>
<div class="t" style="left:483.3px;top:297.86px;font-size:11px;line-height:13px;letter-spacing:-0.159px;">10.4.2001 9:04:55</div>
<div class="t" style="left:595px;top:297.86px;font-size:11px;line-height:13px;width:60.6px;text-align:right;letter-spacing:-0.104px;margin-right:0.104px;">1 990,00</div>
<div style="left:10px;top:313px;width:649px;height:20px;background:#D4D0C8;background-image:conic-gradient(#D4D0C8 25%, #FFFFFF 0 50%, #D4D0C8 0 75%, #FFFFFF 0);background-size:2px 2px"></div>
<div style="left:10px;top:313px;width:20px;height:20px;background:#D4D0C8;box-shadow:inset 1px 1px 0 #FFFFFF,inset -1px -1px 0 #000000,inset -2px -2px 0 #8C8A86,inset 2px 2px 0 #E6E3DE"></div>
<svg style="left:10px;top:313px" width="20" height="20" viewBox="0 0 20 20"><path d="M12 6.5 L12 13.5 L8 10Z" fill="#000"/></svg>
<div style="left:30px;top:313px;width:46px;height:20px;background:#D4D0C8;box-shadow:inset 1px 1px 0 #FFFFFF,inset -1px -1px 0 #000000,inset -2px -2px 0 #8C8A86,inset 2px 2px 0 #E6E3DE"></div>
<div style="left:639px;top:313px;width:20px;height:20px;background:#D4D0C8;box-shadow:inset 1px 1px 0 #FFFFFF,inset -1px -1px 0 #000000,inset -2px -2px 0 #8C8A86,inset 2px 2px 0 #E6E3DE"></div>
<svg style="left:639px;top:313px" width="20" height="20" viewBox="0 0 20 20"><path d="M8.5 6.5 L8.5 13.5 L12.5 10Z" fill="#000"/></svg>
<div style="left:8px;top:335px;width:653px;height:3px;background:#000000"></div>
<div class="t" style="left:11.3px;top:342.86px;font-size:11px;line-height:13px;">Číslo</div>
<div style="left:12px;top:354px;width:90px;height:22px;background:#FFFFFF;box-shadow:inset 1px 1px 0 #808080,inset -1px -1px 0 #FFFFFF,inset 2px 2px 0 #000000,inset -2px -2px 0 #F4F3F0"></div>
<div class="t" style="left:15.3px;top:357.86px;font-size:11px;line-height:13px;">CAT.080.0040</div>
<div class="t" style="left:103.3px;top:342.86px;font-size:11px;line-height:13px;">Druh</div>
<div style="left:103px;top:354px;width:73px;height:21px;background:#FFFFFF;box-shadow:inset 1px 1px 0 #808080,inset -1px -1px 0 #FFFFFF,inset 2px 2px 0 #000000,inset -2px -2px 0 #F4F3F0"></div>
<div class="t" style="left:106.3px;top:356.36px;font-size:11px;line-height:13px;letter-spacing:-0.078px;">sla-camb</div>
<div style="left:157px;top:356px;width:17px;height:17px;background:#D4D0C8;box-shadow:inset 1px 1px 0 #FFFFFF,inset -1px -1px 0 #000000,inset -2px -2px 0 #8C8A86,inset 2px 2px 0 #E6E3DE"></div>
<svg style="left:157px;top:356px" width="17" height="17" viewBox="0 0 17 17"><rect x="3" y="9" width="2" height="2" fill="#000"/><rect x="7" y="9" width="2" height="2" fill="#000"/><rect x="11" y="9" width="2" height="2" fill="#000"/></svg>
<div class="t" style="left:179.3px;top:342.86px;font-size:11px;line-height:13px;">Popis</div>
<div style="left:180px;top:354px;width:309px;height:22px;background:#FFFFFF;box-shadow:inset 1px 1px 0 #808080,inset -1px -1px 0 #FFFFFF,inset 2px 2px 0 #000000,inset -2px -2px 0 #F4F3F0"></div>
<div class="t" style="left:183.3px;top:357.86px;font-size:11px;line-height:13px;letter-spacing:-0.010px;">GALAXY 512/5A 512 smyček, max. 5A</div>
<div class="t" style="left:495.8px;top:342.86px;font-size:11px;line-height:13px;">MJ</div>
<div style="left:492px;top:354px;width:41px;height:22px;background:#FFFFFF;box-shadow:inset 1px 1px 0 #808080,inset -1px -1px 0 #FFFFFF,inset 2px 2px 0 #000000,inset -2px -2px 0 #F4F3F0"></div>
<div class="t" style="left:495.8px;top:357.86px;font-size:11px;line-height:13px;">ks</div>
<div class="t" style="left:535.3px;top:342.86px;font-size:11px;line-height:13px;letter-spacing:-0.220px;">Hmotnost [kg]</div>
<div style="left:536px;top:354px;width:85px;height:22px;background:#FFFFFF;box-shadow:inset 1px 1px 0 #808080,inset -1px -1px 0 #FFFFFF,inset 2px 2px 0 #000000,inset -2px -2px 0 #F4F3F0"></div>
<div class="t" style="left:11.3px;top:378.86px;font-size:11px;line-height:13px;letter-spacing:-0.247px;">Cena 1</div>
<div style="left:12px;top:390px;width:100px;height:22px;background:#FFFFFF;box-shadow:inset 1px 1px 0 #808080,inset -1px -1px 0 #FFFFFF,inset 2px 2px 0 #000000,inset -2px -2px 0 #F4F3F0"></div>
<div class="t" style="left:12px;top:393.86px;font-size:11px;line-height:13px;width:95px;text-align:right;letter-spacing:-0.112px;margin-right:0.112px;">15 795,00 Kč</div>
<div class="t" style="left:115.3px;top:378.86px;font-size:11px;line-height:13px;letter-spacing:-0.247px;">Cena 2</div>
<div style="left:116px;top:390px;width:101px;height:22px;background:#FFFFFF;box-shadow:inset 1px 1px 0 #808080,inset -1px -1px 0 #FFFFFF,inset 2px 2px 0 #000000,inset -2px -2px 0 #F4F3F0"></div>
<div class="t" style="left:116px;top:393.86px;font-size:11px;line-height:13px;width:96px;text-align:right;letter-spacing:-0.112px;margin-right:0.112px;">16 830,00 Kč</div>
<div class="t" style="left:219.3px;top:378.86px;font-size:11px;line-height:13px;letter-spacing:-0.247px;">Cena 3</div>
<div style="left:220px;top:390px;width:101px;height:22px;background:#FFFFFF;box-shadow:inset 1px 1px 0 #808080,inset -1px -1px 0 #FFFFFF,inset 2px 2px 0 #000000,inset -2px -2px 0 #F4F3F0"></div>
<div class="t" style="left:323.3px;top:378.86px;font-size:11px;line-height:13px;letter-spacing:-0.184px;">Ceníková cena</div>
<div style="left:324px;top:390px;width:101px;height:22px;background:#FFFFFF;box-shadow:inset 1px 1px 0 #808080,inset -1px -1px 0 #FFFFFF,inset 2px 2px 0 #000000,inset -2px -2px 0 #F4F3F0"></div>
<div class="t" style="left:324px;top:393.86px;font-size:11px;line-height:13px;width:96px;text-align:right;letter-spacing:-0.112px;margin-right:0.112px;">22 000,00 Kč</div>
<div class="t" style="left:427.3px;top:378.86px;font-size:11px;line-height:13px;letter-spacing:-0.250px;">Náklady</div>
<div style="left:428px;top:390px;width:102px;height:22px;background:#FFFFFF;box-shadow:inset 1px 1px 0 #808080,inset -1px -1px 0 #FFFFFF,inset 2px 2px 0 #000000,inset -2px -2px 0 #F4F3F0"></div>
<div class="t" style="left:428px;top:393.86px;font-size:11px;line-height:13px;width:97px;text-align:right;letter-spacing:-0.112px;margin-right:0.112px;">19 000,00 Kč</div>
<div class="t" style="left:535.3px;top:378.86px;font-size:11px;line-height:13px;letter-spacing:-0.247px;">Montáž [min]</div>
<div style="left:536px;top:390px;width:85px;height:22px;background:#FFFFFF;box-shadow:inset 1px 1px 0 #808080,inset -1px -1px 0 #FFFFFF,inset 2px 2px 0 #000000,inset -2px -2px 0 #F4F3F0"></div>
<div class="t" style="left:11.3px;top:414.86px;font-size:11px;line-height:13px;">Kde rezervovat</div>
<div style="left:12px;top:426px;width:101px;height:22px;background:#FFFFFF;box-shadow:inset 1px 1px 0 #808080,inset -1px -1px 0 #FFFFFF,inset 2px 2px 0 #000000,inset -2px -2px 0 #F4F3F0"></div>
<div class="t" style="left:15.3px;top:429.86px;font-size:11px;line-height:13px;">S</div>
<div style="left:95px;top:429px;width:16px;height:17px;background:#D4D0C8;box-shadow:inset 1px 1px 0 #FFFFFF,inset -1px -1px 0 #000000,inset -2px -2px 0 #8C8A86,inset 2px 2px 0 #E6E3DE"></div>
<svg style="left:95px;top:429px" width="16" height="17" viewBox="0 0 16 17"><path d="M4 6.0 h7 l-3.5 4z" fill="#000"/></svg>
<div class="t" style="left:115.3px;top:414.86px;font-size:11px;line-height:13px;letter-spacing:-0.077px;">Č. skl. karty, výkonu</div>
<div style="left:116px;top:426px;width:92px;height:21px;background:#FFFFFF;box-shadow:inset 1px 1px 0 #808080,inset -1px -1px 0 #FFFFFF,inset 2px 2px 0 #000000,inset -2px -2px 0 #F4F3F0"></div>
<div class="t" style="left:119.3px;top:428.86px;font-size:11px;line-height:13px;letter-spacing:-0.174px;">SK000940</div>
<div style="left:188px;top:428px;width:18px;height:17px;background:#D4D0C8;box-shadow:inset 1px 1px 0 #FFFFFF,inset -1px -1px 0 #000000,inset -2px -2px 0 #8C8A86,inset 2px 2px 0 #E6E3DE"></div>
<svg style="left:188px;top:428px" width="18" height="17" viewBox="0 0 18 17"><rect x="4" y="9" width="2" height="2" fill="#000"/><rect x="8" y="9" width="2" height="2" fill="#000"/><rect x="12" y="9" width="2" height="2" fill="#000"/></svg>
<div class="t" style="left:235.3px;top:418.86px;font-size:11px;line-height:13px;letter-spacing:-0.316px;">Poznámka 2</div>
<div style="left:302px;top:421px;width:25px;height:24px;background:#D4D0C8;box-shadow:inset 1px 1px 0 #FFFFFF,inset -1px -1px 0 #000000,inset -2px -2px 0 #8C8A86,inset 2px 2px 0 #E6E3DE"></div>
<svg style="left:302px;top:421px" width="25" height="24" viewBox="0 0 25 24"><path d="M9 4.5 C12 3.5 15 5 18 7 C20 8 20.5 10 19 10.5 L17.5 10 L16 17 C15 19.5 12 20 10.5 18.5 L4.5 14.5 C3.5 13 5 11.5 6.5 12 L9 12.5Z" fill="#F4F4F4" stroke="#000" stroke-width="1" stroke-dasharray="2 .8"/>
<path d="M4.5 13.5 L13 18 L15 15 L7 12Z" fill="#D0D0D0"/>
<path d="M4 5 L9 6.5 L12 10 L11.5 13 L9.5 14 L9.5 11 L6.5 9.5 L8 9 L4.5 6.5Z" fill="#FF0000" stroke="#C00000" stroke-width=".6"/>
<circle cx="17.8" cy="8.2" r=".8" fill="#C00000"/><circle cx="12.6" cy="17.2" r=".8" fill="#C00000"/></svg>
<div style="left:332px;top:419px;width:289px;height:64px;background:#FFFFFF;box-shadow:inset 1px 1px 0 #808080,inset -1px -1px 0 #FFFFFF,inset 2px 2px 0 #000000,inset -2px -2px 0 #F4F3F0"></div>
<div class="t" style="left:11.3px;top:450.86px;font-size:11px;line-height:13px;letter-spacing:-0.075px;">Č. do rozpočtu</div>
<div style="left:12px;top:462px;width:100px;height:22px;background:#FFFFFF;box-shadow:inset 1px 1px 0 #808080,inset -1px -1px 0 #FFFFFF,inset 2px 2px 0 #000000,inset -2px -2px 0 #F4F3F0"></div>
<div class="t" style="left:115.3px;top:450.86px;font-size:11px;line-height:13px;letter-spacing:-0.236px;">Obj. číslo</div>
<div style="left:116px;top:462px;width:93px;height:22px;background:#FFFFFF;box-shadow:inset 1px 1px 0 #808080,inset -1px -1px 0 #FFFFFF,inset 2px 2px 0 #000000,inset -2px -2px 0 #F4F3F0"></div>
<div class="t" style="left:119.3px;top:465.86px;font-size:11px;line-height:13px;letter-spacing:0.096px;">GALAXY 512/5A</div>
<div class="t" style="left:211.3px;top:450.86px;font-size:11px;line-height:13px;letter-spacing:-0.369px;">Multimediální poznámka</div>
<div style="left:212px;top:462px;width:112px;height:20px;background:#FFFFFF;box-shadow:inset 1px 1px 0 #808080,inset -1px -1px 0 #FFFFFF,inset 2px 2px 0 #000000,inset -2px -2px 0 #F4F3F0"></div>
<div class="t" style="left:214.3px;top:464.86px;font-size:11px;line-height:13px;letter-spacing:-0.366px;">(MMemo)</div>
<div style="left:285px;top:464px;width:19px;height:16px;background:#D4D0C8;box-shadow:inset 1px 1px 0 #FFFFFF,inset -1px -1px 0 #000000,inset -2px -2px 0 #8C8A86,inset 2px 2px 0 #E6E3DE"></div>
<svg style="left:285px;top:464px" width="19" height="16" viewBox="0 0 19 16"><rect x="4" y="8" width="10" height="2" fill="#000"/></svg>
<div style="left:304px;top:464px;width:19px;height:16px;background:#D4D0C8;box-shadow:inset 1px 1px 0 #FFFFFF,inset -1px -1px 0 #000000,inset -2px -2px 0 #8C8A86,inset 2px 2px 0 #E6E3DE"></div>
<svg style="left:304px;top:464px" width="19" height="16" viewBox="0 0 19 16"><rect x="4" y="9" width="2" height="2" fill="#000"/><rect x="8" y="9" width="2" height="2" fill="#000"/><rect x="12" y="9" width="2" height="2" fill="#000"/></svg>
<div style="left:54px;top:512px;width:1px;height:19px;background:#808080"></div>
<div style="left:55px;top:512px;width:1px;height:19px;background:#FFFFFF"></div>
<div style="left:107px;top:512px;width:1px;height:19px;background:#808080"></div>
<div style="left:108px;top:512px;width:1px;height:19px;background:#FFFFFF"></div>
<div style="left:160px;top:512px;width:1px;height:19px;background:#808080"></div>
<div style="left:161px;top:512px;width:1px;height:19px;background:#FFFFFF"></div>
<div style="left:214px;top:512px;width:1px;height:19px;background:#808080"></div>
<div style="left:215px;top:512px;width:1px;height:19px;background:#FFFFFF"></div>
<div style="left:284px;top:512px;width:1px;height:19px;background:#808080"></div>
<div style="left:285px;top:512px;width:1px;height:19px;background:#FFFFFF"></div>
<div style="left:356px;top:512px;width:1px;height:19px;background:#808080"></div>
<div style="left:357px;top:512px;width:1px;height:19px;background:#FFFFFF"></div>
<div style="left:437px;top:512px;width:1px;height:19px;background:#808080"></div>
<div style="left:438px;top:512px;width:1px;height:19px;background:#FFFFFF"></div>
<div style="left:510px;top:512px;width:1px;height:19px;background:#808080"></div>
<div style="left:511px;top:512px;width:1px;height:19px;background:#FFFFFF"></div>
<div style="left:581px;top:512px;width:1px;height:19px;background:#808080"></div>
<div style="left:582px;top:512px;width:1px;height:19px;background:#FFFFFF"></div>
<div class="t" style="left:72.5px;top:516.86px;font-size:11px;line-height:13px;text-decoration:underline">!aaa</div>
<div class="t" style="left:125.5px;top:516.86px;font-size:11px;line-height:13px;text-decoration:underline">aaa</div>
<div class="t" style="left:177.5px;top:516.86px;font-size:11px;line-height:13px;text-decoration:underline">cen-</div>
<div class="t" style="left:225.5px;top:516.86px;font-size:11px;line-height:13px;text-decoration:underline">cen-8013</div>
<div class="t" style="left:295.5px;top:516.86px;font-size:11px;line-height:13px;text-decoration:underline">cen-c21m</div>
<div class="t" style="left:368.5px;top:516.86px;font-size:11px;line-height:13px;text-decoration:underline">cen-c21m-d</div>
<div class="t" style="left:450.5px;top:516.86px;font-size:11px;line-height:13px;text-decoration:underline">cen-c22m</div>
<div class="t" style="left:522.5px;top:516.86px;font-size:11px;line-height:13px;text-decoration:underline">cen-c32m</div>
<div class="t" style="left:594.5px;top:516.86px;font-size:11px;line-height:13px;text-decoration:underline">cen-c32</div>
<div style="left:627px;top:512px;width:36px;height:21px;background:#D4D0C8"></div>
<div style="left:627px;top:516px;width:17px;height:16px;background:#D4D0C8;box-shadow:inset 1px 1px 0 #FFFFFF,inset -1px -1px 0 #000000,inset -2px -2px 0 #8C8A86,inset 2px 2px 0 #E6E3DE"></div>
<svg style="left:627px;top:516px" width="17" height="16" viewBox="0 0 17 16"><path d="M9 4 L9 12 L5 8Z" fill="#808080"/></svg>
<div style="left:644px;top:516px;width:17px;height:16px;background:#D4D0C8;box-shadow:inset 1px 1px 0 #FFFFFF,inset -1px -1px 0 #000000,inset -2px -2px 0 #8C8A86,inset 2px 2px 0 #E6E3DE"></div>
<svg style="left:644px;top:516px" width="17" height="16" viewBox="0 0 17 16"><path d="M6 4 L6 12 L10 8Z" fill="#000"/></svg>
<div style="left:4px;top:537px;width:60px;height:17px;box-shadow:inset 1px 1px 0 #808080,inset -1px -1px 0 #FFFFFF"></div>
<div style="left:66px;top:537px;width:599px;height:17px;box-shadow:inset 1px 1px 0 #808080,inset -1px -1px 0 #FFFFFF"></div>
<div class="t" style="left:5.3px;top:539.36px;font-size:11px;line-height:13px;">0/9</div>
<svg style="left:651px;top:540px" width="13" height="13" viewBox="0 0 13 13"><path d="M12.5 1.5 L1.5 12.5 M12.5 5.5 L5.5 12.5 M12.5 9.5 L9.5 12.5" stroke="#808080" stroke-width="1.6"/><path d="M12.5 0.5 L0.5 12.5 M12.5 4.5 L4.5 12.5 M12.5 8.5 L8.5 12.5" stroke="#fff" stroke-width="1"/></svg>
<div style="left:105px;top:23px;width:57px;height:32px;border:5px solid #FF0000;border-top-width:4.6px;border-radius:3px"></div>
<svg style="left:157px;top:23px" width="28" height="31" viewBox="0 0 28 31"><path d="M1.40 15.75 a12.8 14.3 0 1 0 25.6 0 a12.8 14.3 0 1 0 -25.6 0Z M4.70 15.75 a9.5 10.4 0 1 0 19.0 0 a9.5 10.4 0 1 0 -19.0 0Z" fill="#FF0000" fill-rule="evenodd"/></svg>
<svg style="left:182px;top:23px" width="28" height="31" viewBox="0 0 28 31"><path d="M1.25 15.75 a12.8 14.3 0 1 0 25.6 0 a12.8 14.3 0 1 0 -25.6 0Z M4.30 15.75 a9.75 10.4 0 1 0 19.5 0 a9.75 10.4 0 1 0 -19.5 0Z" fill="#FF0000" fill-rule="evenodd"/></svg>
<svg style="left:207px;top:23px" width="28" height="31" viewBox="0 0 28 31"><path d="M1.60 15.75 a12.7 14.3 0 1 0 25.4 0 a12.7 14.3 0 1 0 -25.4 0Z M5.00 15.75 a9.3 10.4 0 1 0 18.6 0 a9.3 10.4 0 1 0 -18.6 0Z" fill="#FF0000" fill-rule="evenodd"/></svg>
<svg style="left:1px;top:154px" width="31" height="29" viewBox="0 0 31 29"><path d="M1.50 15.00 a14 13.3 0 1 0 28 0 a14 13.3 0 1 0 -28 0Z M6.10 15.00 a9.4 8.7 0 1 0 18.8 0 a9.4 8.7 0 1 0 -18.8 0Z" fill="#FF0000" fill-rule="evenodd"/></svg>
<div class="t" style="left:125.7px;top:54.23px;font-size:28.5px;line-height:30.5px;color:#FF0000;-webkit-text-stroke:.5px #FF0000;transform-origin:0 0;transform:scaleX(0.88);clip-path:polygon(0 0,100% 0,100% 20.3px,11px 20.3px,11px 100%,5.9px 100%,5.9px 20.3px,0 20.3px);font-weight:bold">1</div>
<div class="t" style="left:165.3px;top:54.88px;font-size:28.2px;line-height:30.2px;color:#FF0000;-webkit-text-stroke:.5px #FF0000;transform-origin:0 0;transform:scaleX(1.02);;font-weight:bold">2</div>
<div class="t" style="left:190px;top:54.88px;font-size:28.2px;line-height:30.2px;color:#FF0000;-webkit-text-stroke:.5px #FF0000;transform-origin:0 0;transform:scaleX(1.02);;font-weight:bold">3</div>
<div class="t" style="left:212.5px;top:54.88px;font-size:28.2px;line-height:30.2px;color:#FF0000;-webkit-text-stroke:.5px #FF0000;transform-origin:0 0;transform:scaleX(0.98);;font-weight:bold">4</div>
<div class="t" style="left:35.8px;top:139.76px;font-size:27.5px;line-height:29.5px;color:#FF0000;-webkit-text-stroke:.5px #FF0000;transform-origin:0 0;transform:scaleX(1.05);;font-weight:bold">5</div>
</div></body></html>
